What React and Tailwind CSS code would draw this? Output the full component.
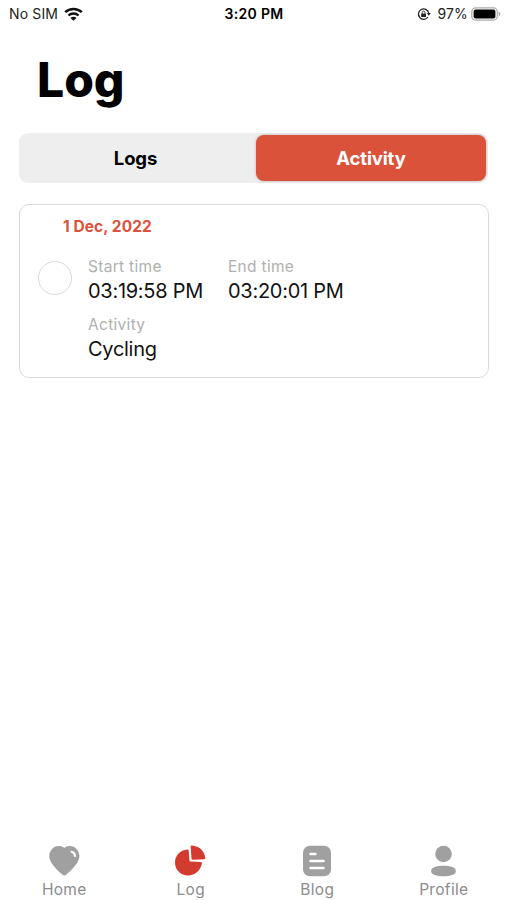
import React from 'react';

const WifiIcon = () => (
  <svg className="w-[19px] h-[14px]" viewBox="0 0 19 14" fill="none">
    <path d="M1.2 5.200C5.800.9 13.200.9 17.800 5.200" stroke="#111" strokeWidth="2.500" />
    <path d="M4.400 8.500c2.900-2.700 7.300-2.700 10.200 0" stroke="#111" strokeWidth="2.300" />
    <path d="M9.500 13.800 6.400 10.900c1.800-1.500 4.400-1.500 6.200 0Z" fill="#111" />
  </svg>
);

const RotationLockIcon = () => (
  <svg className="w-[14px] h-[14px]" viewBox="0 0 14 14" fill="none">
    <path d="M11 10A5.200 5.200 0 1 1 11.700 5.800" stroke="#222" strokeWidth="1.300" />
    <path d="M9.800 6h4l-2 2.800Z" fill="#222" />
    <rect x="4.200" y="6.400" width="4.800" height="3.600" rx=".6" fill="#222" />
    <path d="M5.200 6.700V5.500a1.400 1.400 0 0 1 2.800 0v1.200" stroke="#222" strokeWidth=".9" />
  </svg>
);

const BatteryIcon = () => (
  <svg className="w-[30px] h-[14px]" viewBox="0 0 30 14" fill="none">
    <rect x=".8" y=".8" width="25.400" height="12.400" rx="3.800" stroke="#aaa" strokeWidth="1.200" />
    <rect x="2.600" y="2.600" width="21.800" height="8.800" rx="2" fill="#000" />
    <path d="M27.600 4.600c2.200.7 2.200 4.100 0 4.800Z" fill="#aaa" />
  </svg>
);

const HeartIcon = () => (
  <svg className="w-8 h-8" viewBox="0 0 32 32" fill="none">
    <path d="M16.300 3C13.300.4 7.900.4 4.600 3.400C.4 7.100.3 12.700 3.200 17.500c2.700 4.600 7.200 8.600 11.300 12.300c1.200 1 2.400 1 3.600 0c4.100-3.700 8.600-7.700 11.300-12.300c2.900-4.800 2.800-10.400-1.400-14.100C24.700.4 19.300.4 16.300 3Z" fill="#a0a0a0" />
    <path d="M23.600 6.800c2 .5 3.200 2 3.400 4.200" stroke="#fff" strokeWidth="2.200" strokeLinecap="round" />
  </svg>
);

const PieIcon = () => (
  <svg className="w-8 h-8" viewBox="1 .5 32 32" fill="#d33b2e">
    <path d="M13.300 4.900c.8-.1 1.300.4 1.400 1.200l.7 9.700c.1.900.6 1.300 1.400 1.300l9.800.3c1 .1 1.500.7 1.300 1.700C26.600 26.200 21 31 14.200 31C6.800 31 1 25.300 1 17.900C1 11 6.200 5.400 13.300 4.900Z" />
    <path d="M16.700 2.200c0-.8.500-1.200 1.300-1.100c7.200.4 12.700 5.800 13.300 12.300c.1.800-.4 1.300-1.200 1.300l-11.300.5c-.8 0-1.300-.4-1.300-1.200Z" />
  </svg>
);

const BlogIcon = () => (
  <svg className="w-8 h-8" viewBox="0 0 32 32" fill="none">
    <rect x="2" y=".7" width="28" height="30.600" rx="7" fill="#a0a0a0" />
    <path d="M9.500 9h5M9.500 16h13M9.500 23h13" stroke="#fff" strokeWidth="2.400" strokeLinecap="round" />
  </svg>
);

const ProfileIcon = () => (
  <svg className="w-8 h-8" viewBox="0 0 32 32" fill="#a0a0a0">
    <circle cx="15.500" cy="9" r="8.300" />
    <path d="M15.500 20.700c7 0 12.400 1.500 12.400 5.200s-5.400 5.300-12.400 5.300S3.100 29.600 3.100 25.900S8.500 20.700 15.500 20.700Z" />
  </svg>
);

const navItems = [
  { label: 'Home', icon: HeartIcon },
  { label: 'Log', icon: PieIcon },
  { label: 'Blog', icon: BlogIcon },
  { label: 'Profile', icon: ProfileIcon },
];

const StatusBar = () => (
  <div className="grid grid-cols-3 items-center h-[27px] pl-[9px] pr-[6px] text-[14px] tracking-[0.150px] text-[#222]">
    <div className="flex items-center gap-[6px]">
      <span>No SIM</span>
      <WifiIcon />
    </div>
    <div className="-ml-[2px] text-center font-semibold tracking-[0.300px] text-black">3:20 PM</div>
    <div className="flex items-center justify-end">
      <RotationLockIcon />
      <span className="ml-[6px] mr-[3px]">97%</span>
      <BatteryIcon />
    </div>
  </div>
);

const Field = ({ label, value }) => (
  <div>
    <div className="text-[15.500px] leading-6 tracking-[0.300px] text-[#b0b0b0]">{label}</div>
    <div className="text-[20px] leading-6 tracking-[-0.280px] text-[#111]">{value}</div>
  </div>
);

const App = () => {
  return (
    <div className="flex flex-col w-full h-[900px] bg-white overflow-hidden whitespace-nowrap font-['Inter',sans-serif]">
      <StatusBar />

      <h1 className="mt-[23px] ml-[37px] text-[48px] leading-[60px] font-extrabold text-black">Log</h1>

      {/* Segmented control */}
      <div className="flex mt-[23px] mx-[19px] h-[50px] p-[2px] rounded-[9px] bg-[#eeeeee] text-[18.500px] tracking-[-0.150px] font-bold">
        <button className="flex-1 pt-[2px] pr-[6px] text-black">Logs</button>
        <button className="w-[230px] pt-[2px] rounded-[8px] bg-[#db523a] text-white shadow-[0_0_3px_rgba(0,0,0,0.25)]">
          Activity
        </button>
      </div>

      {/* Activity entry */}
      <div className="mt-[21px] ml-[19px] w-[470px] h-[174px] rounded-[10px] border-[1.500px] border-[#dadada]">
        <div className="mt-[10px] ml-[43px] text-[15.500px] leading-6 tracking-[0.080px] font-bold text-[#dc523b]">1 Dec, 2022</div>
        <div className="flex mt-4 ml-[18px]">
          <div className="w-[34px] h-[34px] mt-[6px] mr-4 rounded-full border-[1.500px] border-[#dadada]" />
          <div className="grid grid-cols-[140px_140px] gap-y-[10px]">
            <Field label="Start time" value="03:19:58 PM" />
            <Field label="End time" value="03:20:01 PM" />
            <Field label="Activity" value="Cycling" />
          </div>
        </div>
      </div>

      {/* Bottom navigation */}
      <nav className="grid grid-cols-4 mt-auto h-[55px] pl-px text-[15.500px] tracking-[0.300px] text-[#8c8c8c]">
        {navItems.map(({ label, icon: Icon }) => (
          <div key={label} className="flex flex-col items-center">
            <Icon />
            <span className="mt-[3px] leading-5">{label}</span>
          </div>
        ))}
      </nav>
    </div>
  );
};

export default App;
